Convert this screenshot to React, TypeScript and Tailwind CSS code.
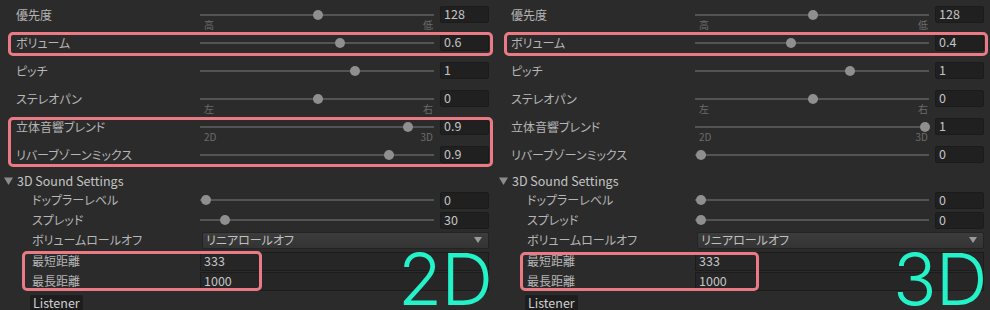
import React from "react";

type SliderRow = {
  label: string;
  value: string;
  pos: number;
  lo?: string;
  hi?: string;
};

type PanelData = {
  top: SliderRow[];
  doppler: string;
  dopplerPos: number;
  spread: string;
  spreadPos: number;
  big: string;
  boxes: { left: number; top: number; width: number; height: number }[];
};

const JP = "font-['Noto_Sans_CJK_JP','Noto_Sans',sans-serif] [font-feature-settings:'palt']";

const Slider: React.FC<{ pos: number; lo?: string; hi?: string; short?: boolean }> = ({ pos, lo, hi, short }) => (
  <div className={`relative w-[234px] shrink-0 ${short ? "h-[20px]" : "h-[28px]"}`}>
    <div className={`absolute left-0 right-0 h-[2px] bg-[#545454] ${short ? "top-[9px]" : "top-[14px]"}`} />
    <div
      className={`absolute h-[10px] w-[10px] rounded-full bg-[#8f8f8f] ${short ? "top-[5px]" : "top-[10px]"}`}
      style={{ left: 6 + pos * 224 - 5 }}
    />
    {lo && (
      <span className="absolute left-[4px] top-[19px] text-[10px] leading-[12px] text-[#6c6c6c]">{lo}</span>
    )}
    {hi && (
      <span className="absolute right-[1px] top-[19px] text-[10px] leading-[12px] text-[#6c6c6c]">{hi}</span>
    )}
  </div>
);

const NumField: React.FC<{ value: string }> = ({ value }) => (
  <div className="ml-[6px] flex h-[17px] w-[49px] shrink-0 items-center rounded-[2px] border border-[#1b1b1b] bg-[#202020] pl-[3px] text-[12.5px] text-[#c4c4c4]">
    {value}
  </div>
);

const Panel: React.FC<{ d: PanelData }> = ({ d }) => (
  <div className={`relative h-[310px] w-[495px] overflow-hidden bg-[#2b2b2b] text-[12px] text-[#b6b6b6] ${JP}`}>
    {d.top.map((r) => (
      <div key={r.label} className="flex h-[28px] items-center">
        <div className="w-[200px] shrink-0 pl-[16px] pt-[1px]">{r.label}</div>
        <Slider pos={r.pos} lo={r.lo} hi={r.hi} />
        <NumField value={r.value} />
      </div>
    ))}

    <div className="flex h-[22px] items-center pl-[4px] pt-[4px]">
      <svg width="9" height="8" viewBox="0 0 9 8" className="mr-[4px]">
        <path d="M0 0.5 L9 0.5 L4.5 8 Z" fill="#8c8c8c" />
      </svg>
      <span className="text-[12.5px] text-[#c4c4c4]">3D Sound Settings</span>
    </div>

    <div className="flex h-[20px] items-center">
      <div className="w-[200px] shrink-0 pl-[32px]">ドップラーレベル</div>
      <Slider pos={d.dopplerPos} short />
      <NumField value={d.doppler} />
    </div>
    <div className="flex h-[20px] items-center">
      <div className="w-[200px] shrink-0 pl-[32px]">スプレッド</div>
      <Slider pos={d.spreadPos} short />
      <NumField value={d.spread} />
    </div>
    <div className="flex h-[20px] items-center">
      <div className="w-[202px] shrink-0 pl-[32px]">ボリュームロールオフ</div>
      <div className="flex h-[17px] w-[287px] items-center justify-between rounded-[2px] border border-[#232323] bg-gradient-to-b from-[#3c3c3c] to-[#343434] px-[3px] text-[#c0c0c0]">
        <span>リニアロールオフ</span>
        <svg width="8" height="6" viewBox="0 0 8 6" className="mr-[3px]">
          <path d="M0 0 L8 0 L4 6 Z" fill="#9a9a9a" />
        </svg>
      </div>
    </div>
    <div className="flex h-[20px] items-center pt-[2px]">
      <div className="w-[200px] shrink-0 pl-[32px]">最短距離</div>
      <div className="flex h-[19px] w-[289px] items-center border border-[#1c1c1c] bg-[#262626] pl-[3px] text-[12.5px] text-[#c4c4c4]">333</div>
    </div>
    <div className="flex h-[20px] items-center pt-[2px]">
      <div className="w-[200px] shrink-0 pl-[32px]">最長距離</div>
      <div className="flex h-[19px] w-[289px] items-center border border-[#1c1c1c] bg-[#262626] pl-[3px] text-[12.5px] text-[#c4c4c4]">1000</div>
    </div>
    <div className="flex h-[20px] items-end pl-[30px]">
      <div className="flex h-[15px] items-center rounded-t-[2px] bg-[#1d1d1d] px-[3px] text-[12.5px] leading-[15px] text-[#d0d0d0]">Listener</div>
    </div>

    <div className="absolute left-[398px] top-[243px] font-['Inter',sans-serif] text-[72px] font-light leading-none tracking-[-1px] text-[#24f2c8]">
      {d.big}
    </div>

    {d.boxes.map((b, i) => (
      <div
        key={i}
        className="absolute rounded-[5px] border-[3px] border-[#ea7a83]"
        style={{ left: b.left, top: b.top, width: b.width, height: b.height }}
      />
    ))}
  </div>
);

const left: PanelData = {
  top: [
    { label: "優先度", value: "128", pos: 0.5, lo: "高", hi: "低" },
    { label: "ボリューム", value: "0.6", pos: 0.6 },
    { label: "ピッチ", value: "1", pos: 0.667 },
    { label: "ステレオパン", value: "0", pos: 0.5, lo: "左", hi: "右" },
    { label: "立体音響ブレンド", value: "0.9", pos: 0.9, lo: "2D", hi: "3D" },
    { label: "リバーブゾーンミックス", value: "0.9", pos: 0.818 },
  ],
  doppler: "0",
  dopplerPos: 0,
  spread: "30",
  spreadPos: 30 / 360,
  big: "2D",
  boxes: [
    { left: 8, top: 32, width: 485, height: 24 },
    { left: 8, top: 117, width: 485, height: 50 },
    { left: 22, top: 251, width: 240, height: 40 },
  ],
};

const right: PanelData = {
  top: [
    { label: "優先度", value: "128", pos: 0.5, lo: "高", hi: "低" },
    { label: "ボリューム", value: "0.4", pos: 0.4 },
    { label: "ピッチ", value: "1", pos: 0.667 },
    { label: "ステレオパン", value: "0", pos: 0.5, lo: "左", hi: "右" },
    { label: "立体音響ブレンド", value: "1", pos: 1, lo: "2D", hi: "3D" },
    { label: "リバーブゾーンミックス", value: "0", pos: 0 },
  ],
  doppler: "0",
  dopplerPos: 0,
  spread: "0",
  spreadPos: 0,
  big: "3D",
  boxes: [
    { left: 9, top: 32, width: 484, height: 24 },
    { left: 25, top: 252, width: 239, height: 39 },
  ],
};

export default function App() {
  return (
    <div className="flex h-[310px] w-[990px] overflow-hidden bg-[#2b2b2b]">
      <Panel d={left} />
      <Panel d={right} />
    </div>
  );
}
